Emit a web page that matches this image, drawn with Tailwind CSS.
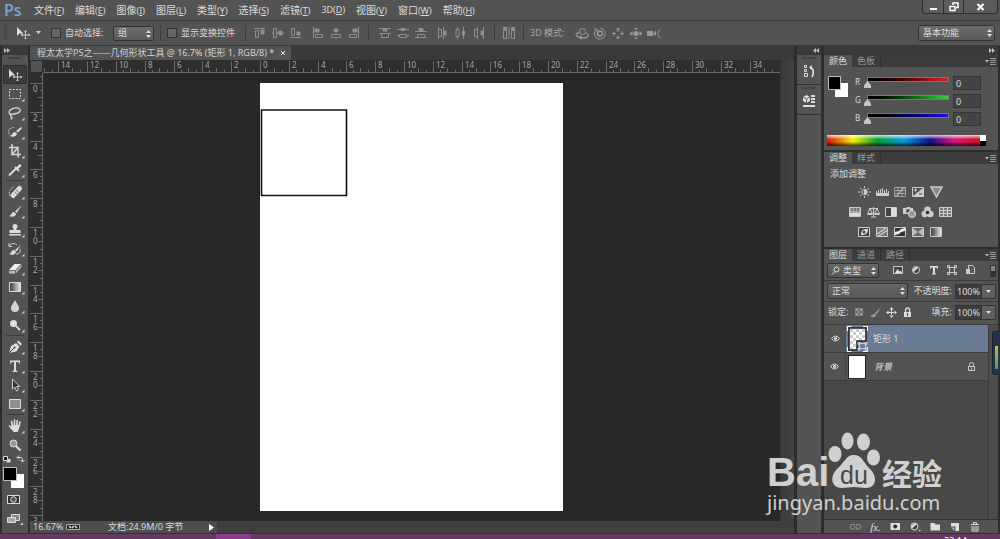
<!DOCTYPE html>
<html lang="zh-CN">
<head>
  <meta charset="UTF-8">
  <meta name="viewport" content="width=device-width, initial-scale=1.0">
  <title>程太太学PS之——几何形状工具</title>
  <script src="https://cdn.jsdelivr.net/npm/@tailwindcss/browser@4"></script>
</head>
<body class="relative flex h-screen flex-col overflow-hidden bg-[#2d2d2d] font-['Noto_Sans','Noto_Sans_CJK_SC',sans-serif] text-[10px] leading-3 text-[#dcdcdc]">

  <!-- 菜单栏 -->
  <header class="flex h-5 shrink-0 items-center bg-[#535353] pl-1">
    <span class="w-[30px] font-['Open_Sans',sans-serif] text-[16px] font-semibold leading-5 text-[#7aa5d2]">Ps</span>
    <nav class="flex flex-1 gap-[11px]">
      <button class="whitespace-nowrap">文件<span class="text-[9px]">(<u>F</u>)</span></button>
      <button class="whitespace-nowrap">编辑<span class="text-[9px]">(<u>E</u>)</span></button>
      <button class="whitespace-nowrap">图像<span class="text-[9px]">(<u>I</u>)</span></button>
      <button class="whitespace-nowrap">图层<span class="text-[9px]">(<u>L</u>)</span></button>
      <button class="whitespace-nowrap">类型<span class="text-[9px]">(<u>Y</u>)</span></button>
      <button class="whitespace-nowrap">选择<span class="text-[9px]">(<u>S</u>)</span></button>
      <button class="whitespace-nowrap">滤镜<span class="text-[9px]">(<u>T</u>)</span></button>
      <button class="whitespace-nowrap text-[9px]">3D(<u>D</u>)</button>
      <button class="whitespace-nowrap">视图<span class="text-[9px]">(<u>V</u>)</span></button>
      <button class="whitespace-nowrap">窗口<span class="text-[9px]">(<u>W</u>)</span></button>
      <button class="whitespace-nowrap">帮助<span class="text-[9px]">(<u>H</u>)</span></button>
    </nav>
    <div class="mr-[2px] flex h-[14px] self-start rounded-b-sm border border-t-0 border-[#2e2e2e] bg-[#5c5c5c]">
      <button aria-label="最小化" class="flex w-[21px] justify-center border-r border-[#2e2e2e]"><svg width="9" height="13"><path d="M1 9h7" stroke="#fff" stroke-width="2"/></svg></button>
      <button aria-label="还原" class="flex w-5 justify-center border-r border-[#2e2e2e]"><svg width="10" height="13" fill="none" stroke="#fff" stroke-width="1.5"><path d="M1 6.500h5v4h-5zM4 5v-2h5v4.500h-2"/></svg></button>
      <button aria-label="关闭" class="flex w-[33px] justify-center"><svg width="9" height="13"><path d="M1.500 4l6 6M7.500 4l-6 6" stroke="#fff" stroke-width="2"/></svg></button>
    </div>
  </header>

  <!-- 选项栏 -->
  <section class="flex h-[26px] shrink-0 items-center border-t border-b border-t-[#383838] border-b-[#383838] bg-[#535353] pr-[5px] pl-1">
    <i class="h-4 w-[3px] bg-[repeating-linear-gradient(#3f3f3f_0_1px,#535353_1px_2px)]"></i>
    <button aria-label="移动工具" class="ml-[9px] flex w-7 items-center gap-[5px]">
      <svg width="15" height="12"><use href="#i-move"/></svg>
      <svg width="6" height="4"><path d="M0 0h5l-2.500 3z" fill="#d0d0d0"/></svg>
    </button>
    <label class="ml-[7px] flex w-[62px] items-center gap-1 whitespace-nowrap text-[9px]"><input type="checkbox" class="size-[10px] shrink-0 appearance-none border border-[#333] bg-[#666]">自动选择:</label>
    <span class="relative flex w-[41px]">
      <select aria-label="选择对象" class="h-[15px] w-full appearance-none rounded-[2px] border border-[#333] bg-linear-to-b from-[#6c6c6c] to-[#5a5a5a] pl-1 text-[9px] leading-3"><option>组</option></select>
      <svg class="absolute top-1 right-[3px]" width="5" height="8" fill="#ddd"><path d="M0 3l2.500-3l2.500 3zM0 5h5l-2.500 3z"/></svg>
    </span>
    <i class="mx-[6px] h-4 border-l border-[#3d3d3d]"></i>
    <label class="flex items-center gap-1 whitespace-nowrap text-[9px]"><input type="checkbox" class="size-[10px] shrink-0 appearance-none border border-[#333] bg-[#666]">显示变换控件</label>
    <i class="ml-[10px] h-4 border-l border-[#3d3d3d]"></i>
    <!-- 对齐与分布 -->
    <div class="ml-2 flex gap-[6px] text-[#8f8f8f]">
      <button aria-label="顶对齐"><svg class="block" width="12" height="12" fill="none" stroke="currentColor"><path d="M0 1.500h11M1.500 3.500h3v7h-3z"/><path d="M7 3h3v4h-3z" fill="currentColor"/></svg></button>
      <button aria-label="垂直居中对齐"><svg class="block" width="12" height="12" fill="none" stroke="currentColor"><path d="M0 6h1.500M5 6h2M10 6h2M1.500 1.500h3v9h-3z"/><path d="M7 4h3v4h-3z" fill="currentColor"/></svg></button>
      <button aria-label="底对齐"><svg class="block" width="12" height="12" fill="none" stroke="currentColor"><path d="M0 10.500h11M1.500 1.500h3v7h-3z"/><path d="M7 5h3v3h-3z" fill="currentColor"/></svg></button>
    </div>
    <div class="ml-[10px] flex gap-[6px] text-[#8f8f8f]">
      <button aria-label="左对齐"><svg class="block" width="12" height="12" fill="none" stroke="currentColor"><path d="M1.500 0v11M3.500 7.500h7v3h-7z"/><path d="M3 2h4v3h-4z" fill="currentColor"/></svg></button>
      <button aria-label="水平居中对齐"><svg class="block" width="12" height="12" fill="none" stroke="currentColor"><path d="M6 0v2M6 5v2M6 10v2M1.500 7.500h9v3h-9z"/><path d="M4 2.500h4v2h-4z" fill="currentColor"/></svg></button>
      <button aria-label="右对齐"><svg class="block" width="12" height="12" fill="none" stroke="currentColor"><path d="M10.500 0v11M1.500 7.500h7v3h-7z"/><path d="M5 2h4v3h-4z" fill="currentColor"/></svg></button>
    </div>
    <i class="ml-2 h-4 border-l border-[#3d3d3d]"></i>
    <div class="ml-[10px] flex gap-[6px] text-[#8f8f8f]">
      <button aria-label="按顶分布"><svg class="block" width="12" height="12" fill="none" stroke="currentColor"><path d="M0 1.500h12M0 6.500h12M2.500 7v3.500h7v-3.500"/><path d="M4 2h4v2h-4z" fill="currentColor"/></svg></button>
      <button aria-label="垂直居中分布"><svg class="block" width="12" height="12" fill="none" stroke="currentColor"><path d="M0 2.500h12M0 8.500h2.500M9.500 8.500h2.500M2.500 7.500h7v3h-7z"/><path d="M4 1.500h4v2h-4z" fill="currentColor"/></svg></button>
      <button aria-label="按底分布"><svg class="block" width="12" height="12" fill="none" stroke="currentColor"><path d="M0 4.500h12M0 10.500h12M2.500 10v-2.500h7v2.500"/><path d="M4 1.500h4v2h-4z" fill="currentColor"/></svg></button>
    </div>
    <div class="ml-[10px] flex gap-[6px] text-[#8f8f8f]">
      <button aria-label="按左分布"><svg class="block" width="12" height="12" fill="none" stroke="currentColor"><path d="M1.500 0v12M6.500 0v12M1.500 2.500h3v7h-3"/><path d="M7 4h2v4h-2z" fill="currentColor"/></svg></button>
      <button aria-label="水平居中分布"><svg class="block" width="12" height="12" fill="none" stroke="currentColor"><path d="M2.500 0v2.500M2.500 9.500v2.500M8.500 0v12M1 2.500h3v7h-3z"/><path d="M7.500 4h2v4h-2z" fill="currentColor"/></svg></button>
      <button aria-label="按右分布"><svg class="block" width="12" height="12" fill="none" stroke="currentColor"><path d="M4.500 0v12M10.500 0v12M4.500 2.500h-3v7h3"/><path d="M8 4h2v4h-2z" fill="currentColor"/></svg></button>
    </div>
    <i class="ml-[9px] h-4 border-l border-[#3d3d3d]"></i>
    <button aria-label="自动对齐图层" class="mx-[8px] text-[#8f8f8f]"><svg class="block" width="12" height="12" fill="none" stroke="currentColor"><path d="M.500 4v7.500h3v-7.500M8.500 4v7.500h3v-7.500M6 0v12" /><path d="M.500 .500h3v3h-3zM8.500 .500h3v3h-3z" fill="currentColor"/></svg></button>
    <i class="h-4 border-l border-[#3d3d3d]"></i>
    <span class="ml-[6px] w-[45px] whitespace-nowrap text-[9px] text-[#a8a8a8]">3D 模式:</span>
    <div class="flex gap-1 text-[#999]">
      <button aria-label="旋转 3D 对象"><svg class="block" width="14" height="13" fill="none" stroke="currentColor"><circle cx="7.500" cy="4.500" r="3"/><path d="M4 6c-5 0-3 4 3 5M9 11c5 0 5-4 2-5M5 9l3 2l-3 1" stroke-width="1.300"/></svg></button>
      <button aria-label="滚动 3D 对象"><svg class="block" width="14" height="13" fill="none" stroke="currentColor"><circle cx="7" cy="6.500" r="2.500" stroke-width="1.500"/><path d="M3 2.500a5.500 5.500 0 1 0 4-1.500M1 2h3v3"/></svg></button>
      <button aria-label="拖动 3D 对象"><svg class="block" width="14" height="13" fill="none" stroke="currentColor"><path d="M5 3l2-2l2 2M5 10l2 2l2-2M3.500 4.500l-2 2l2 2M10.500 4.500l2 2l-2 2M7 2v3M7 8v3M2 6.500h3M9 6.500h3"/></svg></button>
      <button aria-label="滑动 3D 对象"><svg class="block" width="14" height="13" fill="currentColor"><circle cx="7" cy="6.500" r="2.500"/><path d="M5 2.500l2-2l2 2zM5 10.500l2 2l2-2zM3.500 4v5l-3-2.500zM10.500 4v5l3-2.500zM3 6h8v1h-8z"/></svg></button>
      <button aria-label="缩放 3D 相机"><svg class="block" width="14" height="13" fill="currentColor"><path d="M0 4h6v5h-6zM6 6.500l3-2.500v5z"/><path d="M13 2l-2.500 4.500l2.500 4.500" fill="none" stroke="currentColor"/></svg></button>
    </div>
    <span class="relative ml-auto flex w-[77px]">
      <select aria-label="工作区" class="h-4 w-full appearance-none rounded-[2px] border border-[#333] bg-linear-to-b from-[#6c6c6c] to-[#5a5a5a] pl-1 text-[9px] leading-3"><option>基本功能</option></select>
      <svg class="absolute top-1 right-[3px]" width="5" height="8" fill="#ddd"><path d="M0 3l2.500-3l2.500 3zM0 5h5l-2.500 3z"/></svg>
    </span>
  </section>

  <main class="flex min-h-0 flex-1 px-[2px]">
    <!-- 工具栏 -->
    <aside class="flex w-[26px] shrink-0 flex-col bg-[#535353]">
      <div class="flex h-[10px] items-center bg-[#3a3a3a] pl-[2px]"><svg width="6" height="5" fill="#bbb"><path d="M0 0l3 2.500l-3 2.500zM3 0l3 2.500l-3 2.500z"/></svg></div>
      <i class="mt-[2px] mb-[6px] h-[2px] w-[14px] self-center bg-[repeating-linear-gradient(90deg,#383838_0_1px,#505050_1px_2px)]"></i>
      <button aria-label="移动" class="mx-[1px] flex h-[19px] shrink-0 items-center justify-center rounded-[2px] border border-[#303030] bg-[#3c3c3c]"><svg width="15" height="12"><use href="#i-move"/></svg></button>
      <button aria-label="矩形选框" class="flex h-[19px] shrink-0 items-center justify-center"><svg width="20" height="16"><path d="M4.500 3.500h11v9h-11z" fill="none" stroke="#d8d8d8" stroke-dasharray="2 1.300"/><use href="#i-more"/></svg></button>
      <button aria-label="套索" class="flex h-[19px] shrink-0 items-center justify-center"><svg width="20" height="16"><path d="M6 10c-5-3 1-8 7-7c5 2 1 6-5 6c-3 0-3 2-1.500 3c1 1 .500 2-1 2" fill="none" stroke="#d8d8d8" stroke-width="1.300"/><use href="#i-more"/></svg></button>
      <button aria-label="快速选择" class="flex h-[19px] shrink-0 items-center justify-center"><svg width="20" height="16"><path d="M16 3l-5 4l2 1.500l4-4.500zM10 8c-3 0-2 3-5 4c3 2 7 0 7-2.500z" fill="#ddd"/><path d="M8 12c-4 0-5-3-4-6c1-2 4-3 6-2" fill="none" stroke="#ccc" stroke-dasharray="1.500 1"/><use href="#i-more"/></svg></button>
      <button aria-label="裁剪" class="flex h-[19px] shrink-0 items-center justify-center"><svg width="20" height="16"><path d="M7 1v10.500h9M4 4.500h9v10M8 10.500l4-5" fill="none" stroke="#d8d8d8" stroke-width="1.500"/><use href="#i-more"/></svg></button>
      <button aria-label="吸管" class="flex h-[19px] shrink-0 items-center justify-center"><svg width="20" height="16"><path d="M11 6l3-3.500c1.500-1 3 .500 2 2l-3.500 3z" fill="#ddd"/><path d="M10 5l4 4M11 6.500l-5 5l-2 2" fill="none" stroke="#ddd" stroke-width="1.800"/><use href="#i-more"/></svg></button>
      <i class="mx-1 my-px h-px shrink-0 bg-[#3c3c3c]"></i>
      <button aria-label="污点修复" class="flex h-[19px] shrink-0 items-center justify-center"><svg width="20" height="16"><path d="M8 11.500l6.500-7" stroke="#d8d8d8" stroke-width="5" stroke-linecap="round"/><path d="M9.500 8l3.500 3M11 6l3.500 3" stroke="#777"/><path d="M5 12c-2-4 0-8 4-9" fill="none" stroke="#ccc" stroke-dasharray="1.500 1"/><use href="#i-more"/></svg></button>
      <button aria-label="画笔" class="flex h-[19px] shrink-0 items-center justify-center"><svg width="20" height="16"><path d="M17 2l-7 6.500l1.500 1.500zM9 9c-3 0-2 3-5 4c4 1.500 7 .500 7-2.500z" fill="#ddd"/><use href="#i-more"/></svg></button>
      <button aria-label="仿制图章" class="flex h-[19px] shrink-0 items-center justify-center"><svg width="20" height="16"><path d="M8.500 8c.500-1-1-2-1-3.500a2.500 2.500 0 0 1 5 0c0 1.500-1.500 2.500-1 3.500h4v3h-11v-3zM4 12h12v1.500h-12z" fill="#ddd"/><use href="#i-more"/></svg></button>
      <button aria-label="历史记录画笔" class="flex h-[19px] shrink-0 items-center justify-center"><svg width="20" height="16"><path d="M16 4l-6 5l1.500 1.500zM9 9c-3 0-2 3-5 4c4 1.500 7 .500 7-2.500z" fill="#ddd"/><path d="M4 5c2-3 6-3 8-1M4 2v3.500h3M15 8c1 3-1 5-4 5" fill="none" stroke="#ccc"/><use href="#i-more"/></svg></button>
      <button aria-label="橡皮擦" class="flex h-[19px] shrink-0 items-center justify-center"><svg width="20" height="16"><path d="M4 10l5.500-6h6.500l-5.500 6z" fill="#f0f0f0"/><path d="M4 10.800h6.300v2.700h-6.300zM11 10.500l5.500-6v2.500l-5.500 6z" fill="#bbb"/><use href="#i-more"/></svg></button>
      <button aria-label="渐变" class="flex h-[19px] shrink-0 items-center justify-center"><svg width="20" height="16"><defs><linearGradient id="g1"><stop stop-color="#333"/><stop offset="1" stop-color="#eee"/></linearGradient></defs><path d="M4.500 3.500h11v9h-11z" fill="url(#g1)" stroke="#ddd"/><use href="#i-more"/></svg></button>
      <button aria-label="模糊" class="flex h-[19px] shrink-0 items-center justify-center"><svg width="20" height="16"><path d="M10 2c1 3 4 5 4 8a4 4 0 0 1-8 0c0-3 3-5 4-8z" fill="#d5d5d5"/><use href="#i-more"/></svg></button>
      <button aria-label="减淡" class="flex h-[19px] shrink-0 items-center justify-center"><svg width="20" height="16"><circle cx="8.500" cy="6.500" r="3.500" fill="#ddd"/><path d="M11 9l4 4" stroke="#ddd" stroke-width="1.800"/><use href="#i-more"/></svg></button>
      <i class="mx-1 my-px h-px shrink-0 bg-[#3c3c3c]"></i>
      <button aria-label="钢笔" class="flex h-[19px] shrink-0 items-center justify-center"><svg width="20" height="16"><path d="M4 14l2-7l5-3l3.500 3.500l-3 5zM12 3l1.500-1.500l3.500 3.500l-1.500 1.500z" fill="#ddd"/><path d="M4 14l5-5" stroke="#444"/><circle cx="9.500" cy="8.500" r="1" fill="#444"/><use href="#i-more"/></svg></button>
      <button aria-label="横排文字" class="flex h-[19px] shrink-0 items-center justify-center"><svg width="20" height="16"><path d="M5 2.500h10v3h-1l-.500-1.500h-2.500v8.500l1.500 .500v1h-5v-1l1.500-.500v-8.500h-2.500l-.500 1.500h-1z" fill="#ddd"/><use href="#i-more"/></svg></button>
      <button aria-label="路径选择" class="flex h-[19px] shrink-0 items-center justify-center"><svg width="20" height="16"><path d="M7.500 2v10l2.300-2l1.700 4l1.800-1l-1.600-3.500h3z" fill="#333" stroke="#ccc"/><use href="#i-more"/></svg></button>
      <button aria-label="矩形" class="flex h-[19px] shrink-0 items-center justify-center"><svg width="20" height="16"><path d="M4.500 3.500h11v9h-11z" fill="#909090" stroke="#ddd"/><use href="#i-more"/></svg></button>
      <i class="mx-1 my-px h-px shrink-0 bg-[#3c3c3c]"></i>
      <button aria-label="抓手" class="flex h-[19px] shrink-0 items-center justify-center"><svg width="20" height="16"><path d="M7.500 8l-1-4.500M9.500 7v-5M11.800 7l.400-4.500M14 8l1-4M7 11l-2.500-3" stroke="#ddd" stroke-width="1.600" stroke-linecap="round"/><path d="M6.500 7h8.300l-.800 4l-1.500 3h-4l-2.500-4z" fill="#ddd"/><use href="#i-more"/></svg></button>
      <button aria-label="缩放" class="flex h-[19px] shrink-0 items-center justify-center"><svg width="20" height="16"><circle cx="8.500" cy="6.500" r="3.500" fill="#999" stroke="#ddd"/><path d="M11 9l4.500 4.500" stroke="#ddd" stroke-width="2.200"/></svg></button>
      <svg class="shrink-0" width="26" height="79">
        <path d="M1.500 2.500h4v4h-4z" fill="#111" stroke="#ddd"/><path d="M6 5h2.500v3.500h-4v-1.500h1.500z" fill="#ddd"/>
        <path d="M15.500 3.500h4q1 0 1 4M17 1.500l-2 2l2 2M18.500 6l2 2l2-2" fill="none" stroke="#ddd"/>
        <path d="M9 20h13v14h-13z" fill="#fff"/>
        <path d="M1.500 13.500h13v13h-13z" fill="#000" stroke="#bbb"/>
        <path d="M5.500 41.500h12v8h-12z" fill="#333" stroke="#ddd"/><circle cx="11.500" cy="45.500" r="2.800" fill="#555" stroke="#ddd"/>
        <path d="M9.500 60.500h8v6h-8z" fill="#888" stroke="#ddd"/><path d="M5.500 63.500h8v5h-8z" fill="#aaa" stroke="#ddd"/><path d="M21 68v3h-3z" fill="#ccc"/>
      </svg>
    </aside>

    <!-- 文档窗口 -->
    <section class="flex min-w-0 flex-1 flex-col border-l-2 border-[#2d2d2d] bg-[#282828]">
      <div class="flex h-[14px] shrink-0 bg-[#3a3a3a]">
        <div class="flex items-center gap-[6px] whitespace-nowrap bg-[#535353] pr-1 pl-[7px]">
          <span class="text-[9px] text-[#d2d2d2]">程太太学PS之——几何形状工具 @ 16.7% (矩形 1, RGB/8) *</span>
          <button aria-label="关闭文档"><svg width="7" height="5"><path d="M1 0l4 4M5 0l-4 4" stroke="#ddd"/></svg></button>
        </div>
      </div>
      <div class="flex min-h-0 flex-1">
        <div class="flex min-w-0 flex-1 flex-col">
          <div class="flex h-[13px] shrink-0">
            <i class="w-[13px] shrink-0 border border-[#303030] bg-[#535353]"></i>
            <svg id="rulerX" class="h-full min-w-0 flex-1 border-b border-[#6a6a6a] bg-[#2e2e2e] text-[8px]" fill="#a8a8a8"></svg>
          </div>
          <div class="flex min-h-0 flex-1">
            <svg id="rulerY" class="h-full w-[13px] shrink-0 border-r border-[#6a6a6a] bg-[#2e2e2e] text-[8px]" fill="#a8a8a8"></svg>
            <div class="flex min-w-0 flex-1 items-center justify-center overflow-hidden">
              <svg class="bg-white" width="303" height="428"><path d="M1.500 27h85v85.500h-85z" fill="none" stroke="#111" stroke-width="1.600"/></svg>
            </div>
          </div>
        </div>
        <i class="w-[14px] shrink-0 border-l border-[#333] bg-linear-to-r from-[#3a3a3a] to-[#444]"></i>
      </div>
      <footer class="flex h-3 shrink-0 bg-[#3f3f3f]">
        <div class="flex w-[187px] items-center bg-[#4d4d4d] pr-[2px] pl-[3px] text-[9px]">
          <span class="w-[33px]">16.67%</span>
          <svg width="15" height="8"><path d="M.500 1.500h13v5h-13z" fill="#222" stroke="#aaa"/><path d="M3 3l2 2M6 5l2-2M9 3l2 2" stroke="#ddd" stroke-width="1.500"/></svg>
          <span class="ml-[27px] whitespace-nowrap">文档:24.9M/0 字节</span>
          <button aria-label="状态选项" class="ml-auto"><svg width="6" height="7"><path d="M0 0l5 3.500l-5 3.500z" fill="#fff"/></svg></button>
        </div>
      </footer>
    </section>

    <!-- 折叠面板 -->
    <aside class="flex w-[30px] shrink-0 flex-col border-x-[3px] border-l-[#2d2d2d] border-r-[#2d2d2d] bg-[#535353]">
      <div class="flex h-[9px] shrink-0 items-center justify-end bg-[#3a3a3a] pr-[2px]"><svg width="6" height="5" fill="#bbb"><path d="M3 0v5l-3-2.500zM6 0v5l-3-2.500z"/></svg></div>
      <button aria-label="历史记录" class="flex h-[30px] flex-col items-center gap-[6px] border-b border-[#333] pt-[2px]">
        <i class="h-[2px] w-[14px] bg-[repeating-linear-gradient(90deg,#383838_0_1px,#505050_1px_2px)]"></i>
        <svg width="12" height="13" fill="none" stroke="#ddd"><path d="M1.500 .500h2v2h-2zM1.500 4.500h2v2h-2zM1.500 8.500h3v3h-3z"/><path d="M7 3c4 0 4 5 2 9" stroke-width="1.700"/><path d="M9 0v5l-3-2.500z" fill="#ddd" stroke="none"/></svg>
      </button>
      <button aria-label="属性" class="flex h-[30px] flex-col items-center gap-[6px] border-b border-[#333] pt-[2px]">
        <i class="h-[2px] w-[14px] bg-[repeating-linear-gradient(90deg,#383838_0_1px,#505050_1px_2px)]"></i>
        <svg width="12" height="13" fill="#ddd"><path d="M0 2l3.500-2l3.500 2v4l-3.500 2l-3.500-2zM8 0h4v2h-4zM8 3h4v2h-4zM8 6h4v2h-4zM0 10h12v2h-12z"/><path d="M0 2l3.500 2l3.500-2M3.500 4v4" fill="none" stroke="#666"/></svg>
      </button>
    </aside>

    <!-- 右侧面板 -->
    <aside class="flex w-[174px] shrink-0 flex-col bg-[#535353]">
      <div class="flex h-[9px] shrink-0 items-center justify-end bg-[#3a3a3a] pr-[3px]"><svg width="6" height="5" fill="#bbb"><path d="M0 0l3 2.500l-3 2.500zM3 0l3 2.500l-3 2.500z"/></svg></div>
      <div class="flex h-3 shrink-0 items-center bg-[#3c3c3c] text-[9px]">
        <button class="h-full bg-[#535353] px-[5px]">颜色</button>
        <button class="h-full border-r border-[#303030] px-[5px] text-[#999]">色板</button>
        <button aria-label="面板菜单" class="ml-auto pr-[2px]"><svg class="block" width="11" height="7"><use href="#i-menu"/></svg></button>
      </div>
      <div class="flex h-[83px] shrink-0 flex-col pt-[9px]">
        <div class="flex flex-1">
          <svg class="shrink-0" width="31" height="24"><path d="M11 7h13v14h-13z" fill="#fff" /><path d="M4.500 .500h12v13h-12z" fill="#000" stroke="#bbb"/></svg>
          <div class="flex flex-col">
            <div class="flex h-[18px] items-start">
              <label for="cr" class="w-3 leading-3 text-[8px]">R</label>
              <input id="cr" type="range" max="255" value="0" class="mt-px h-[5px] w-[82px] appearance-none border border-[#777] bg-linear-to-r from-black to-[#e02020] [&::-webkit-slider-thumb]:mt-[10px] [&::-webkit-slider-thumb]:-ml-1 [&::-webkit-slider-thumb]:size-[7px] [&::-webkit-slider-thumb]:appearance-none [&::-webkit-slider-thumb]:bg-[#c4c4c4] [&::-webkit-slider-thumb]:[clip-path:polygon(50%_0,100%_60%,100%_100%,0_100%,0_60%)]">
              <input aria-label="R 值" value="0" class="ml-1 h-[14px] w-7 border border-[#353535] bg-[#444] pl-[2px] text-[9px] leading-3">
            </div>
            <div class="flex h-[18px] items-start">
              <label for="cg" class="w-3 leading-3 text-[8px]">G</label>
              <input id="cg" type="range" max="255" value="0" class="mt-px h-[5px] w-[82px] appearance-none border border-[#777] bg-linear-to-r from-black to-[#35d435] [&::-webkit-slider-thumb]:mt-[10px] [&::-webkit-slider-thumb]:-ml-1 [&::-webkit-slider-thumb]:size-[7px] [&::-webkit-slider-thumb]:appearance-none [&::-webkit-slider-thumb]:bg-[#c4c4c4] [&::-webkit-slider-thumb]:[clip-path:polygon(50%_0,100%_60%,100%_100%,0_100%,0_60%)]">
              <input aria-label="G 值" value="0" class="ml-1 h-[14px] w-7 border border-[#353535] bg-[#444] pl-[2px] text-[9px] leading-3">
            </div>
            <div class="flex h-[18px] items-start">
              <label for="cb" class="w-3 leading-3 text-[8px]">B</label>
              <input id="cb" type="range" max="255" value="0" class="mt-px h-[5px] w-[82px] appearance-none border border-[#777] bg-linear-to-r from-black to-[#1414e8] [&::-webkit-slider-thumb]:mt-[10px] [&::-webkit-slider-thumb]:-ml-1 [&::-webkit-slider-thumb]:size-[7px] [&::-webkit-slider-thumb]:appearance-none [&::-webkit-slider-thumb]:bg-[#c4c4c4] [&::-webkit-slider-thumb]:[clip-path:polygon(50%_0,100%_60%,100%_100%,0_100%,0_60%)]">
              <input aria-label="B 值" value="0" class="ml-1 h-[14px] w-7 border border-[#353535] bg-[#444] pl-[2px] text-[9px] leading-3">
            </div>
          </div>
        </div>
        <div class="mx-[3px] mb-1 flex h-[11px] w-[159px]">
          <i class="flex-1 bg-[linear-gradient(to_bottom,#fffc,#fff0_40%,#0000_60%,#000b),linear-gradient(to_right,#e01010,#f8f000_17%,#00a030_33%,#00a0e8_50%,#101090_67%,#e01080_83%,#d81020)]"></i>
          <i class="w-[6px] bg-linear-to-b from-white from-50% to-black to-50%"></i>
        </div>
      </div>

      <div class="flex h-[14px] shrink-0 items-center border-t-2 border-[#2d2d2d] bg-[#3c3c3c] text-[9px]">
        <button class="h-full bg-[#535353] px-[5px]">调整</button>
        <button class="h-full border-r border-[#303030] px-[5px] text-[#999]">样式</button>
        <button aria-label="面板菜单" class="ml-auto pr-[2px]"><svg class="block" width="11" height="7"><use href="#i-menu"/></svg></button>
      </div>
      <div class="flex h-[83px] shrink-0 flex-col px-[6px] pt-1 text-[9px]">
        <span>添加调整</span>
        <div class="mt-[6px] flex w-[141px] flex-col items-center gap-2 text-[#ccc]">
          <div class="flex gap-[5px]">
            <svg width="13" height="12" fill="none" stroke="currentColor"><circle cx="6.500" cy="6" r="2.500"/><path d="M6.500 3.500a2.500 2.500 0 0 1 0 5z" fill="currentColor"/><path d="M6.500 0v2M6.500 10v2M0 6h2.500M10.500 6h2.500M2 2l1.500 1.500M11 2l-1.500 1.500M2 10l1.500-1.500M11 10l-1.500-1.500"/></svg>
            <svg width="13" height="12" fill="currentColor"><path d="M0 7h13v3h-13zM0 7v-2h1v2zM2 7v-3h1v3zM4 7v-4h1v4zM6 7v-5h1v5zM8 7v-3h1v3zM10 7v-4h1v4zM12 7v-2h1v2z"/></svg>
            <svg width="13" height="12" fill="none" stroke="currentColor"><path d="M.500 1.500h11v9h-11zM4 1v9M8 1v9M1 4.500h10M1 7.500h10" opacity=".6"/><path d="M1 10c6 0 4-8 10-8"/></svg>
            <svg width="13" height="12" fill="none" stroke="currentColor"><path d="M.500 1.500h11v9h-11z"/><path d="M1 10l10-8v8z" fill="currentColor" stroke="none"/><path d="M2 4h3M3.500 2.500v3"/><path d="M7 8h3" stroke="#444"/></svg>
            <svg width="13" height="12"><path d="M1 1h11l-5.500 10z" fill="#8a8a8a" stroke="currentColor" stroke-width="1.500"/></svg>
          </div>
          <div class="flex gap-[5px]">
            <svg width="13" height="12"><path d="M.500 1.500h11v9h-11z" fill="#aaa" stroke="currentColor"/><path d="M3 2v3M6 2v3M9 2v3" stroke="#444"/><path d="M1 7h10v3h-10z" fill="#ddd"/></svg>
            <svg width="13" height="12" fill="none" stroke="currentColor"><path d="M6.500 1v10M4 11h5M2 2.500h9M3 2.500l-2.300 5h4.600zM10 2.500l-2.300 5h4.600z"/><path d="M.500 8h5M7.500 8h5" stroke-width="2"/></svg>
            <svg width="13" height="12"><path d="M.500 1.500h11v9h-11z" fill="#444" stroke="currentColor"/><path d="M6 2h5v8h-5z" fill="#ddd"/></svg>
            <svg width="13" height="12"><path d="M0 2h3l1-1h3l1 1h2v6h-10z" fill="#ccc"/><circle cx="5" cy="5" r="2" fill="#555"/><circle cx="9" cy="8" r="3.500" fill="#999" stroke="#ddd"/></svg>
            <svg width="13" height="12" fill="#ccc"><circle cx="6.500" cy="3.800" r="3.300"/><circle cx="3.800" cy="8" r="3.300"/><circle cx="9.200" cy="8" r="3.300"/><circle cx="6.500" cy="6.500" r="1.800" fill="#333"/></svg>
            <svg width="13" height="12" fill="#777" stroke="currentColor"><path d="M.500 1.500h12v9h-12zM4.500 1v9M8.500 1v9M1 4.500h11M1 7.500h11"/></svg>
          </div>
          <div class="flex gap-[5px]">
            <svg width="13" height="12"><path d="M.500 1.500h11v9h-11z" fill="#444" stroke="currentColor"/><path d="M3 9c0-5 2-6 7-6c0 4-2 6-7 6z" fill="#ddd"/><circle cx="6" cy="6" r="1.500" fill="#444"/></svg>
            <svg width="13" height="12"><path d="M.500 1.500h11v9h-11z" fill="#777" stroke="currentColor"/><path d="M1 8l9-6M2 10.500l9-6" stroke="#ccc" stroke-width="1.500"/></svg>
            <svg width="13" height="12"><path d="M.500 1.500h11v9h-11z" fill="#333" stroke="currentColor"/><path d="M1 6l4-1l2-2l4-1v3l-4 1l-2 2l-4 1z" fill="#eee"/></svg>
            <svg width="13" height="12"><path d="M.500 1.500h11v9h-11z" fill="#666" stroke="currentColor"/><path d="M1 2l5 4l5-4v8l-5-4l-5 4z" fill="#bbb"/></svg>
            <svg width="13" height="12"><path d="M.500 1.500h11v9h-11z" fill="url(#g1)" stroke="currentColor"/></svg>
          </div>
        </div>
      </div>

      <div class="flex h-[14px] shrink-0 items-center border-t-2 border-[#2d2d2d] bg-[#3c3c3c] text-[9px]">
        <button class="h-full bg-[#535353] px-[5px]">图层</button>
        <button class="h-full border-r border-[#303030] px-[5px] text-[#999]">通道</button>
        <button class="h-full border-r border-[#303030] px-[5px] text-[#999]">路径</button>
        <button aria-label="面板菜单" class="ml-auto pr-[2px]"><svg class="block" width="11" height="7"><use href="#i-menu"/></svg></button>
      </div>
      <div class="flex h-5 shrink-0 items-center border-b border-[#3c3c3c] pl-[3px]">
        <span class="relative flex w-[52px]">
          <select aria-label="过滤类型" class="h-[15px] w-full appearance-none rounded-[2px] border border-[#333] bg-linear-to-b from-[#666] to-[#585858] pl-[15px] text-[9px] leading-3"><option>类型</option></select>
          <svg class="absolute top-[3px] left-1" width="10" height="9" fill="none" stroke="#ddd"><circle cx="5.500" cy="3.500" r="2.500"/><path d="M4 5.500l-3 3"/></svg>
          <svg class="absolute top-1 right-[3px]" width="5" height="8" fill="#ddd"><path d="M0 3l2.500-3l2.500 3zM0 5h5l-2.500 3z"/></svg>
        </span>
        <div class="ml-[14px] flex gap-[7px]">
          <button aria-label="像素图层"><svg class="block" width="11" height="11"><path d="M.500 1.500h9v7h-9z" fill="#444" stroke="#ccc"/><path d="M2 8l2.500-4l2 2.500l1-1l1.500 2.500z" fill="#ddd"/></svg></button>
          <button aria-label="调整图层"><svg class="block" width="11" height="11"><circle cx="5" cy="5" r="3.500" fill="#444" stroke="#ccc"/><path d="M2 7.500a4 4 0 0 1 5.500-5z" fill="#ddd"/></svg></button>
          <button aria-label="文字图层"><svg class="block" width="11" height="11"><path d="M1 1h8v2.500h-1l-.500-1h-1.500v6h1v1h-4v-1h1v-6h-1.500l-.500 1h-1z" fill="#ddd"/></svg></button>
          <button aria-label="形状图层"><svg class="block" width="11" height="11" fill="none" stroke="#ccc"><path d="M2.500 2.500h5v5h-5zM.500 .500h2v2h-2zM7.500 .500h2v2h-2zM.500 7.500h2v2h-2zM7.500 7.500h2v2h-2z"/></svg></button>
          <button aria-label="智能对象"><svg class="block" width="11" height="11"><path d="M3.500 .500h4l2 2v6h-6z" fill="#555" stroke="#ccc"/><path d="M1 4h4v5h-4z" fill="#ccc"/></svg></button>
        </div>
        <button aria-label="打开过滤" class="mr-[2px] ml-auto h-3 w-[6px] border border-[#333] bg-linear-to-b from-[#888] from-50% to-[#333] to-50%"></button>
      </div>
      <div class="flex h-[21px] shrink-0 items-center border-b border-[#3c3c3c] pr-[2px] pl-[3px] text-[9px]">
        <span class="relative flex w-[81px]">
          <select aria-label="混合模式" class="h-4 w-full appearance-none rounded-[2px] border border-[#333] bg-linear-to-b from-[#666] to-[#585858] pl-1 text-[9px] leading-3"><option>正常</option></select>
          <svg class="absolute top-1 right-[3px]" width="5" height="8" fill="#ddd"><path d="M0 3l2.500-3l2.500 3zM0 5h5l-2.500 3z"/></svg>
        </span>
        <label for="op" class="ml-auto whitespace-nowrap">不透明度:</label>
        <input id="op" value="100%" class="ml-[3px] h-[15px] w-[27px] border border-[#353535] bg-[#3c3c3c] px-px text-[9px] leading-3">
        <button aria-label="调整不透明度" class="flex h-[15px] w-[14px] items-center justify-center border border-l-0 border-[#353535] bg-[#606060]"><svg width="5" height="3"><path d="M0 0h5l-2.500 3z" fill="#ddd"/></svg></button>
      </div>
      <div class="flex h-[22px] shrink-0 items-center pr-[2px] pb-[2px] pl-1 text-[9px]">
        <span class="whitespace-nowrap">锁定:</span>
        <div class="ml-[6px] flex gap-[5px]">
          <button aria-label="锁定透明像素"><svg class="block" width="11" height="11"><path d="M1.500 1.500h7v7h-7z" fill="#666" stroke="#888"/><path d="M2 2h2v2h-2zM6 2h2v2h-2zM4 4h2v2h-2zM2 6h2v2h-2zM6 6h2v2h-2z" fill="#999"/></svg></button>
          <button aria-label="锁定图像像素"><svg class="block" width="11" height="11" fill="#999"><path d="M11 0l-6 6l1.500 1.500zM5 6.500c-2 0-2 2-5 3c3 1.500 6 .500 6-1.500z"/></svg></button>
          <button aria-label="锁定位置"><svg class="block" width="11" height="11" fill="#ddd"><path d="M5 2h1v7h-1zM2 5h7v1h-7zM3.500 2.500l2-2.500l2 2.500zM3.500 8.500l2 2.500l2-2.500zM2.500 3.500v4l-2.500-2zM8.500 3.500v4l2.500-2z"/></svg></button>
          <button aria-label="锁定全部"><svg class="block" width="11" height="11"><path d="M2 5h7v5h-7z" fill="#ddd"/><path d="M3.500 5v-2a2 2 0 0 1 4 0v2" fill="none" stroke="#ddd" stroke-width="1.300"/><path d="M5.500 6v3" stroke="#444"/></svg></button>
        </div>
        <label for="fl" class="ml-auto whitespace-nowrap">填充:</label>
        <input id="fl" value="100%" class="ml-[3px] h-[15px] w-[27px] border border-[#353535] bg-[#3c3c3c] px-px text-[9px] leading-3">
        <button aria-label="调整填充" class="flex h-[15px] w-[14px] items-center justify-center border border-l-0 border-[#353535] bg-[#606060]"><svg width="5" height="3"><path d="M0 0h5l-2.500 3z" fill="#ddd"/></svg></button>
      </div>
      <div class="flex min-h-0 flex-1 border-t border-[#3c3c3c]">
        <ul class="flex-1 bg-[#484848] text-[9px]">
          <li class="flex h-7 items-center border-b border-[#3c3c3c] bg-[#6b7d94]">
            <button aria-label="隐藏矩形 1" class="flex h-full w-[22px] items-center justify-center bg-[#535353]"><svg width="9" height="7"><use href="#i-eye"/></svg></button>
            <svg class="ml-px" width="21" height="26">
              <defs><pattern id="chk" width="6" height="6" patternUnits="userSpaceOnUse"><path d="M0 0h6v6h-6z" fill="#fff"/><path d="M0 0h3v3h-3zM3 3h3v3h-3z" fill="#ccc"/></pattern></defs>
              <path d="M2 2h17v13h-9v9h-8z" fill="url(#chk)" stroke="#222" stroke-width="1.500"/>
              <path d="M.500 5v-4.500h4M16 .500h4.500v4.500M.500 21v4.500h4M16 25.500h4.500v-4.500" fill="none" stroke="#fff"/>
              <path d="M12.500 17.500h6v5h-6zM11 16.500h2v2h-2zM18 16.500h2v2h-2zM11 22h2v2h-2zM18 22h2v2h-2z" fill="none" stroke="#c8d2e0"/>
            </svg>
            <span class="ml-[5px]">矩形 1</span>
          </li>
          <li class="flex h-7 items-center border-b border-[#3c3c3c] bg-[#535353] pr-3">
            <button aria-label="隐藏背景" class="flex h-full w-[22px] items-center justify-center border-r border-[#444]"><svg width="9" height="7"><use href="#i-eye"/></svg></button>
            <i class="ml-[2px] h-[24px] w-[18px] border border-[#222] bg-white"></i>
            <span class="ml-2 italic">背景</span>
            <svg class="ml-auto" width="9" height="10" fill="none" stroke="#ccc"><path d="M1.500 4.500h6v4h-6zM2.500 4.500v-2a2 2 0 0 1 4 0v2M4.500 5.500v2"/></svg>
          </li>
        </ul>
        <i class="w-[10px] border-l border-[#3c3c3c] bg-[#4c4c4c]"></i>
      </div>
      <div class="flex h-[14px] shrink-0 items-center gap-[9px] border-t border-[#333] pl-[26px]">
        <button aria-label="链接图层"><svg class="block" width="11" height="10" fill="none" stroke="#999"><path d="M5 2.500h-2.500a2 2 0 0 0 0 4.500h2.500M6 2.500h2.500a2 2 0 0 1 0 4.500h-2.500M3.500 4.800h4"/></svg></button>
        <button class="w-[11px] font-['Liberation_Serif',serif] text-[11px] italic leading-[10px]">fx.</button>
        <button aria-label="添加蒙版"><svg class="block" width="11" height="10"><path d="M.500 1h9.500v7h-9.500z" fill="#ddd"/><circle cx="5.200" cy="4.500" r="2" fill="#333"/></svg></button>
        <button aria-label="新建调整图层"><svg class="block" width="11" height="10"><circle cx="4.500" cy="4.500" r="3.500" fill="#444" stroke="#ddd"/><path d="M1.500 7a4 4 0 0 1 5.500-5z" fill="#ddd"/><path d="M9 8h1.500v1h-1.500z" fill="#ddd"/></svg></button>
        <button aria-label="新建组"><svg class="block" width="11" height="10"><path d="M.500 1h4l1 1.500h4.500v6h-9.500z" fill="#ddd"/></svg></button>
        <button aria-label="新建图层"><svg class="block" width="11" height="10"><path d="M1 1h8v8h-3.500v-4.500h-4.500z" fill="#ddd"/><path d="M1 5.500h3.500v3.500z" fill="#aaa"/></svg></button>
        <button aria-label="删除图层"><svg class="block" width="11" height="10" fill="none" stroke="#ddd"><path d="M1 2.500h8M3.500 2v-1.500h3v1.500M2 4v5h6v-5M4 4v4M6 4v4"/></svg></button>
      </div>
    </aside>
  </main>

  <!-- 任务栏 -->
  <footer class="flex h-[6px] shrink-0 overflow-hidden border-t border-[#3a2a3a] bg-[#653a62]">
    <i class="ml-[216px] w-[35px] bg-[#8e3a8e]"></i>
    <time class="mr-[33px] ml-auto pt-[2px] text-[9px] leading-[9px] text-white">22:14</time>
  </footer>

  <!-- 桌面小工具 -->
  <div class="absolute top-[331px] right-0 flex h-[44px] w-2 flex-col rounded-l-[3px] border border-r-0 border-[#1c2430] bg-[#26344a] pt-[14px] pb-[5px] pl-[2px]">
    <i class="w-[3px] flex-1 bg-linear-to-b from-[#c8b840] to-[#2e9a80]"></i>
  </div>

  <!-- 水印 -->
  <div class="pointer-events-none absolute right-[57px] bottom-[22px] w-[176px] text-[#d0d0d0]">
    <div class="flex h-[57px] items-end">
      <span class="w-[61px] font-['Liberation_Sans',sans-serif] text-[40px] font-bold leading-[34px]">Bai</span>
      <span class="relative flex w-[52px] justify-center">
        <svg class="absolute bottom-0 left-0" width="52" height="57" fill="currentColor"><ellipse cx="7" cy="22" rx="6.500" ry="8"/><ellipse cx="19.500" cy="9" rx="6" ry="8.500"/><ellipse cx="35.500" cy="10" rx="6.500" ry="8.500"/><ellipse cx="45.500" cy="25.500" rx="6.500" ry="8"/><path d="M26 23c8 0 10 8 15 13c9 8 8 20-3 20c-5 0-7-1-12-1s-7 1-12 1c-11 0-13-12-4-20c6-5 8-13 16-13z"/></svg>
        <span class="relative font-['Liberation_Sans',sans-serif] text-[25px] leading-[28px] text-[#484848]">du</span>
      </span>
      <span class="ml-[2px] font-['Noto_Sans_CJK_SC',sans-serif] text-[30px] font-bold leading-[34px]">经验</span>
    </div>
    <div class="whitespace-nowrap text-[20px] leading-7">jingyan.baidu.com</div>
  </div>

  <!-- 公用图标 -->
  <svg class="hidden">
    <symbol id="i-move"><path d="M1 0v9l2.500-2.500h4z" fill="#ddd"/><path d="M9.500 4v8M5.500 8h8" stroke="#ccc"/><path d="M8 5l1.500-2l1.500 2zM8 11l1.500 1.500l1.500-1.500zM12.500 6.500v3l2-1.500zM6.500 6.500v3l-2-1.500z" fill="#ccc"/></symbol>
    <symbol id="i-more"><path d="M19.500 12.500v3h-3z" fill="#ccc"/></symbol>
    <symbol id="i-menu"><path d="M0 2h4l-2 2.500z" fill="#bbb"/><path d="M5 .500h6M5 2.500h6M5 4.500h6M5 6.500h6" stroke="#999"/></symbol>
    <symbol id="i-eye"><path d="M.500 3.500q4-5 8 0q-4 5-8 0z" fill="#555" stroke="#ddd"/><circle cx="4.500" cy="3.500" r="1.500" fill="#ddd"/></symbol>
  </svg>

  <script>
    // 标尺：每 2 厘米一个大刻度
    const STEP = 28.8;
    const rulerX = document.getElementById('rulerX');
    const rulerY = document.getElementById('rulerY');
    let x = '', y = '';
    for (let i = -8; i <= 17; i++) {
      const p = Math.round(217 + i * STEP);
      if (i > -8) x += `<path d="M${p + .5} 1v11" stroke="#6a6a6a"/><text x="${p + 3}" y="8">${Math.abs(i * 2)}</text>`;
      for (let k = 1; k < 4; k++) x += `<path d="M${Math.round(p + k * STEP / 4) + .5} ${k === 2 ? 8 : 10}v4" stroke="#6a6a6a"/>`;
    }
    for (let i = -1; i <= 15; i++) {
      const p = Math.round(10 + i * STEP);
      y += `<path d="M0 ${p + .5}h12" stroke="#6a6a6a"/>`;
      // 两位数竖排，末尾只露出首位
      const digits = i < 0 ? [] : String(i * 2).slice(0, i === 15 ? 1 : 2).split('');
      digits.forEach((c, n) => { y += `<text x="3" y="${p + 9 + n * 8}">${c}</text>`; });
      for (let k = 1; k < 4; k++) y += `<path d="M${k === 2 ? 8 : 10} ${Math.round(p + k * STEP / 4) + .5}h4" stroke="#6a6a6a"/>`;
    }
    rulerX.innerHTML = x;
    rulerY.innerHTML = y;
  </script>
</body>
</html>
